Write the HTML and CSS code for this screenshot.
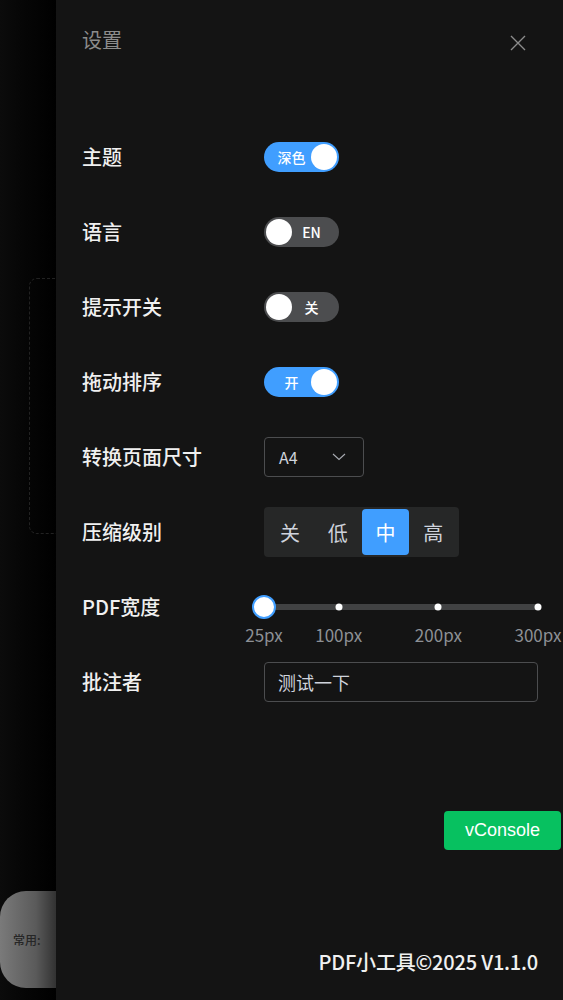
FILE: index.html
```html
<!DOCTYPE html>
<html lang="zh-CN">
<head>
  <meta charset="UTF-8" />
  <meta name="viewport" content="width=device-width, initial-scale=1.0"/>
  <title>设置</title>
  <link rel="stylesheet" href="styles.css">
</head>
<body>

  <div class="page-under">
    <div class="drop-zone"></div>
    <div class="quick-bar">常用:</div>
  </div>

  <aside class="drawer">
    <header class="drawer-header">
      <span class="drawer-title">设置</span>
      <svg class="close" width="16" height="16" viewBox="0 0 16 16">
        <path d="M1 1 L15 15 M15 1 L1 15" stroke="#8c8c8c" stroke-width="1.4" fill="none"/>
      </svg>
    </header>

    <form class="settings">
      <div class="row">
        <label class="label">主题</label>
        <div class="switch on"><span class="switch-text">深色</span><span class="knob"></span></div>
      </div>

      <div class="row">
        <label class="label">语言</label>
        <div class="switch"><span class="knob"></span><span class="switch-text">EN</span></div>
      </div>

      <div class="row">
        <label class="label">提示开关</label>
        <div class="switch"><span class="knob"></span><span class="switch-text">关</span></div>
      </div>

      <div class="row">
        <label class="label">拖动排序</label>
        <div class="switch on"><span class="switch-text">开</span><span class="knob"></span></div>
      </div>

      <div class="row">
        <label class="label">转换页面尺寸</label>
        <div class="select">
          <span>A4</span>
          <svg width="14" height="8" viewBox="0 0 14 8">
            <path d="M1 1 L7 6.5 L13 1" stroke="#a8abb2" stroke-width="1.1" fill="none"/>
          </svg>
        </div>
      </div>

      <div class="row">
        <label class="label">压缩级别</label>
        <div class="segmented">
          <span class="seg-item">关</span>
          <span class="seg-item">低</span>
          <span class="seg-item active">中</span>
          <span class="seg-item">高</span>
        </div>
      </div>

      <div class="row">
        <label class="label">PDF宽度</label>
        <div class="slider">
          <div class="track"></div>
          <span class="stop" style="left: 27.27%"></span>
          <span class="stop" style="left: 63.64%"></span>
          <span class="stop" style="left: 100%"></span>
          <span class="thumb" style="left: 0%"></span>
          <span class="mark" style="left: 0%">25px</span>
          <span class="mark" style="left: 27.27%">100px</span>
          <span class="mark" style="left: 63.64%">200px</span>
          <span class="mark" style="left: 100%">300px</span>
        </div>
      </div>

      <div class="row">
        <label class="label">批注者</label>
        <div class="text-input">测试一下</div>
      </div>
    </form>

    <footer class="drawer-footer">PDF小工具©2025 V1.1.0</footer>
  </aside>

  <div class="vconsole">vConsole</div>

</body>
</html>
```

FILE: styles.css
```css
body {
  margin: 0;
  padding: 0;
  height: 100vh;
  overflow: hidden;
  display: flex;
  background: #000;
  font-family: "Noto Sans CJK SC", "Noto Sans", sans-serif;
  color: #e8e8e8;
}

/* pagina por baixo do drawer */
.page-under {
  flex: 0 0 56px;
  overflow: hidden;
  background: linear-gradient(to right, #0b0b0b, #060606 40%, #000);
  padding-top: 278px;
  box-sizing: border-box;
}

.drop-zone {
  margin-left: 29px;
  width: 120px;
  height: 256px;
  border: 1px dashed #222;
  border-radius: 8px;
  box-sizing: border-box;
}

.quick-bar {
  margin-top: 357px;
  width: 120px;
  height: 97px;
  border-radius: 26px;
  background: linear-gradient(to right, #7a7a7a, #5a5a5a 30%, #2f2f2f 48%, #2a2a2a);
  color: #262626;
  font-size: 12px;
  font-weight: 500;
  display: flex;
  align-items: center;
  padding-left: 13px;
  box-sizing: border-box;
}

.drawer {
  flex: 1;
  background: #141414;
  display: flex;
  flex-direction: column;
  padding: 0 25px 0 26px;
}

.drawer-header {
  height: 80px;
  display: flex;
  align-items: center;
  justify-content: space-between;
  padding-right: 12px;
}

.drawer-title {
  font-size: 20px;
  color: #8c8c8c;
  line-height: 28px;
}

.close {
  margin-top: 5px;
}

.settings {
  margin-top: 52px;
  display: flex;
  flex-direction: column;
  gap: 25px;
}

.row {
  display: flex;
  align-items: center;
  height: 50px;
}

.label {
  flex: 0 0 182px;
  font-size: 20px;
  font-weight: 500;
  color: #f0f0f0;
  line-height: 28px;
}

/* switch */
.switch {
  width: 75px;
  height: 30px;
  border-radius: 15px;
  background: #4c4d4f;
  padding: 2px;
  box-sizing: border-box;
  display: flex;
  align-items: center;
}

.switch.on {
  background: #409eff;
}

.knob {
  width: 26px;
  height: 26px;
  border-radius: 50%;
  background: #fff;
  flex: 0 0 26px;
}

.switch-text {
  flex: 1;
  text-align: center;
  font-size: 14px;
  font-weight: 500;
  color: #fff;
  line-height: 20px;
  padding-right: 6px;
}

.switch.on .switch-text {
  padding-right: 0;
  padding-left: 6px;
}

/* select */
.select {
  width: 100px;
  height: 40px;
  border: 1px solid #4c4d4f;
  border-radius: 4px;
  box-sizing: border-box;
  display: flex;
  align-items: center;
  justify-content: space-between;
  padding: 0 17px 0 14px;
  font-size: 16px;
  color: #cfd3dc;
}

/* segmented */
.segmented {
  display: flex;
  padding: 2px;
  background: #262727;
  border-radius: 4px;
  height: 50px;
  box-sizing: border-box;
}

.seg-item {
  width: 47.75px;
  display: flex;
  align-items: center;
  justify-content: center;
  font-size: 20px;
  color: #cfd3dc;
  border-radius: 4px;
}

.seg-item.active {
  background: #409eff;
  color: #fff;
}

/* slider */
.slider {
  position: relative;
  width: 274px;
  height: 50px;
  display: flex;
  align-items: center;
}

.track {
  width: 100%;
  height: 6px;
  border-radius: 3px;
  background: #414243;
}

.stop {
  position: absolute;
  top: 50%;
  width: 7px;
  height: 7px;
  border-radius: 50%;
  background: #fff;
  transform: translate(-50%, -50%);
}

.thumb {
  position: absolute;
  top: 50%;
  width: 24px;
  height: 24px;
  border-radius: 50%;
  background: #fff;
  border: 2px solid #409eff;
  box-sizing: border-box;
  transform: translate(-50%, -50%);
}

.mark {
  position: absolute;
  top: 43px;
  font-size: 17px;
  line-height: 20px;
  color: #8d9095;
  transform: translateX(-50%);
  white-space: nowrap;
}

/* input */
.text-input {
  width: 274px;
  height: 40px;
  border: 1px solid #4c4d4f;
  border-radius: 4px;
  box-sizing: border-box;
  display: flex;
  align-items: center;
  padding-left: 13px;
  font-size: 18px;
  color: #cfd3dc;
}

.drawer-footer {
  margin-top: auto;
  padding-bottom: 24px;
  text-align: right;
  font-size: 20px;
  font-weight: 500;
  letter-spacing: -0.2px;
  line-height: 28px;
  color: #f0f0f0;
}

.vconsole {
  position: fixed;
  top: 811px;
  right: 2px;
  width: 117px;
  height: 39px;
  border-radius: 4px;
  background: #07c160;
  color: #fff;
  font-family: "Liberation Sans", Arial, sans-serif;
  font-size: 18px;
  display: flex;
  align-items: center;
  justify-content: center;
}
```
